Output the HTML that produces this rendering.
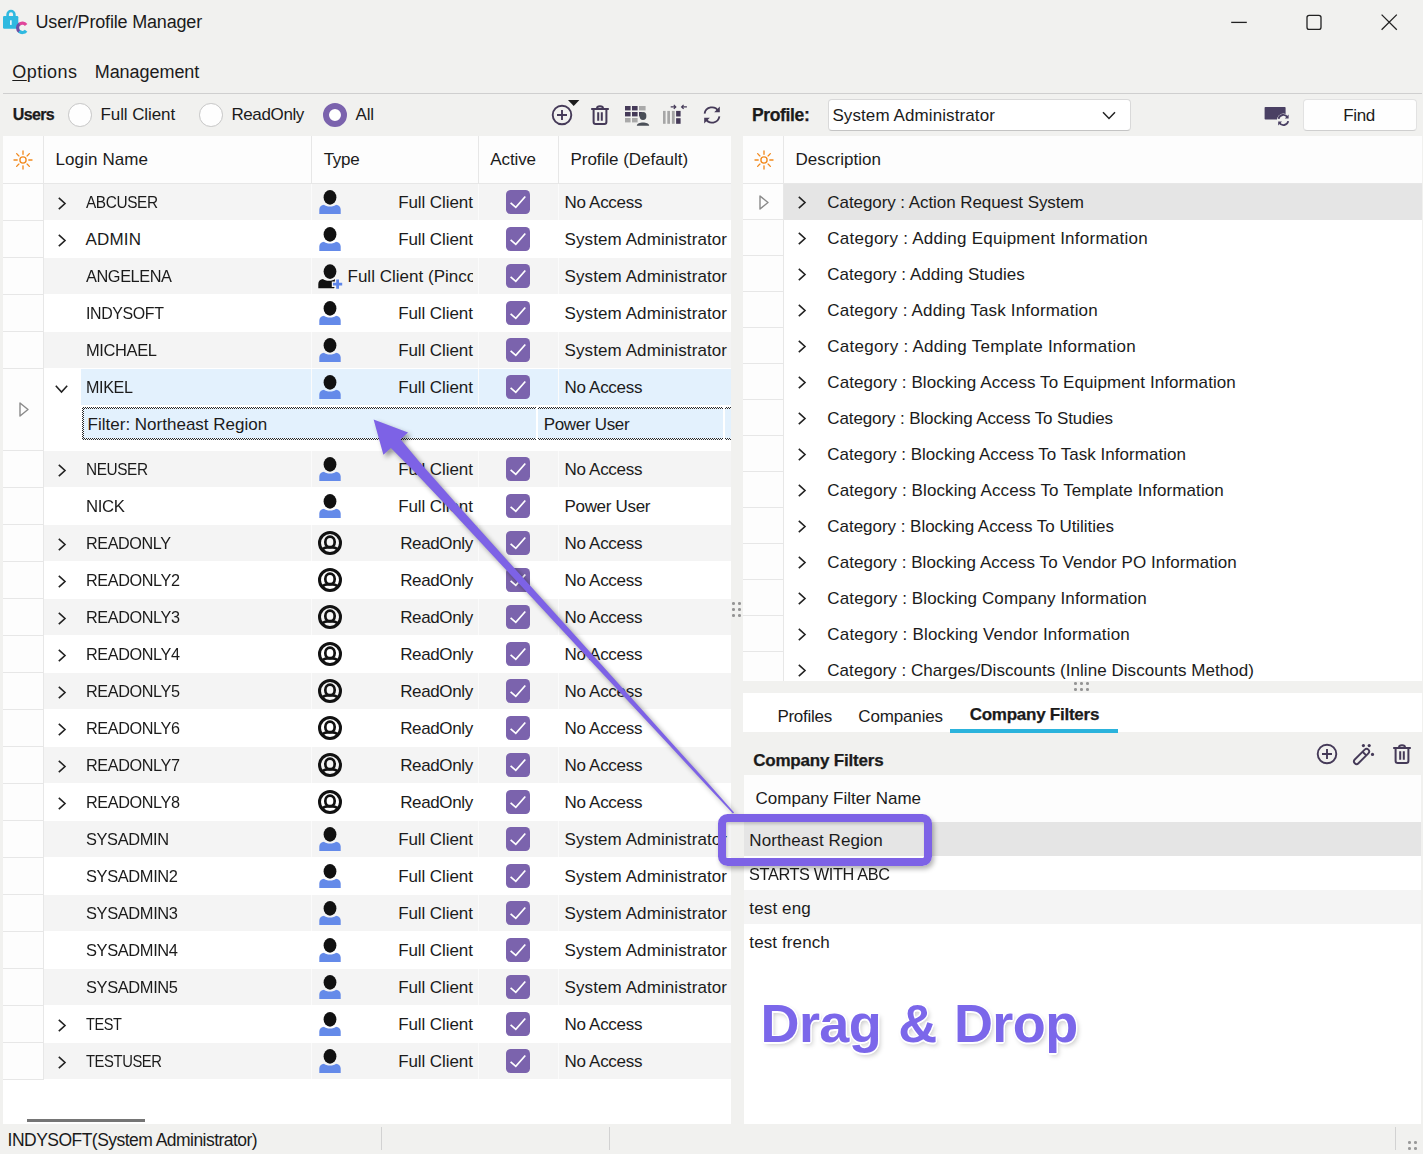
<!DOCTYPE html>
<html lang="en"><head><meta charset="utf-8"><title>User/Profile Manager</title>
<style>
*{box-sizing:border-box;margin:0;padding:0}
html,body{width:1423px;height:1154px;overflow:hidden;background:#f1f1ef}
body{position:relative;font-family:"Liberation Sans",sans-serif;font-size:17px;color:#1b1b1b;}
.a{position:absolute;white-space:nowrap}
.t{position:absolute;white-space:nowrap;line-height:36px;height:36px}
.b{font-weight:bold}
svg{position:absolute;overflow:visible}
</style></head>
<body>
<svg style="left:0;top:0" width="40" height="40" viewBox="0 0 40 40"><path d="M7.6 16.5 V14.6 a3.4 3.6 0 0 1 6.8 0 V16.5" fill="none" stroke="#2fb9e0" stroke-width="2.6"/><rect x="3" y="16" width="15.3" height="12.8" rx="1.2" fill="#2fb9e0"/><rect x="10" y="20.3" width="1.7" height="4.6" fill="#e8f7fc"/><path d="M26.1 24.9 A4.7 4.7 0 0 0 19.2 24.3" fill="none" stroke="#e0449a" stroke-width="3.2"/><path d="M19.5 24 A4.7 4.7 0 0 0 19.5 31.6" fill="none" stroke="#6e4fa5" stroke-width="3.2"/><path d="M19.2 31.3 A4.7 4.7 0 0 0 26.1 30.7" fill="none" stroke="#2fb9e0" stroke-width="3.2"/></svg>
<div class="t" style="top:4px;font-size:18px;left:35.5px;letter-spacing:-0.18px;">User/Profile Manager</div>
<svg style="left:1225px;top:8px" width="180" height="30" viewBox="0 0 180 30"><path d="M6.2 14.4 H21.8" stroke="#222" stroke-width="1.3" fill="none"/><rect x="82" y="7.4" width="14" height="14" rx="2.2" fill="none" stroke="#222" stroke-width="1.3"/><path d="M156.6 6.6 L171.8 21.8 M171.8 6.6 L156.6 21.8" stroke="#222" stroke-width="1.3" fill="none"/></svg>
<div class="t" style="top:54px;font-size:18px;left:12.3px;letter-spacing:0.45px;"><span style="text-decoration:underline;text-underline-offset:2px;text-decoration-thickness:1px">O</span>ptions</div>
<div class="t" style="top:54px;font-size:18px;left:94.7px;letter-spacing:-0.05px;">Management</div>
<div class="a" style="left:3px;top:93px;width:1419px;height:1px;background:#cfcfcf;"></div>
<div class="t" style="top:97px;font-size:16px;left:12.7px;font-weight:bold;-webkit-text-stroke:0.25px;letter-spacing:-0.6px;">Users</div>
<div class="a" style="left:68.2px;top:103.2px;width:23.6px;height:23.6px;border-radius:50%;border:1px solid #c6c6c6;background:#fefefe"></div>
<div class="t" style="top:97px;font-size:17px;left:100.5px;letter-spacing:-0.089px;">Full Client</div>
<div class="a" style="left:199.1px;top:103.2px;width:23.6px;height:23.6px;border-radius:50%;border:1px solid #c6c6c6;background:#fefefe"></div>
<div class="t" style="top:97px;font-size:17px;left:231.4px;letter-spacing:-0.374px;">ReadOnly</div>
<div class="a" style="left:323px;top:103px;width:24px;height:24px;border-radius:50%;border:6.4px solid #7b63ad;background:#fff"></div>
<div class="t" style="top:97px;font-size:17px;left:355.4px;letter-spacing:-0.098px;">All</div>
<svg style="left:551px;top:104px" width="22" height="22" viewBox="0 0 22 22"><circle cx="11" cy="11" r="9.3" fill="none" stroke="#453a58" stroke-width="1.9"/><path d="M11 6 V16 M6 11 H16" stroke="#453a58" stroke-width="1.9" fill="none"/></svg>
<svg style="left:567.5px;top:100px" width="12" height="7" viewBox="0 0 12 7"><path d="M0 0 H11.4 L5.7 6 Z" fill="#1c1c1c"/></svg>
<svg style="left:591px;top:105px" width="18" height="20" viewBox="0 0 18 20"><path d="M0.2 4 H17.8" stroke="#453a58" stroke-width="2" fill="none"/><path d="M6 3.6 C6 0.6 12 0.6 12 3.6" stroke="#453a58" stroke-width="2" fill="none"/><path d="M2.6 4 V17 a2 2 0 0 0 2 2 H13.4 a2 2 0 0 0 2 -2 V4" stroke="#453a58" stroke-width="2" fill="none"/><path d="M7.2 7.2 V15.8 M10.8 7.2 V15.8" stroke="#453a58" stroke-width="2" fill="none"/></svg>
<svg style="left:625px;top:106px" width="25" height="20" viewBox="0 0 25 20"><g fill="#453a58"><rect x="0" y="0" width="5.6" height="4.4"/><rect x="7" y="0" width="5.6" height="4.4"/><rect x="0" y="6" width="5.6" height="4.4"/><rect x="7" y="6" width="5.6" height="4.4"/><rect x="14" y="6" width="3" height="4.4"/></g><g fill="#a9a9a9"><rect x="14" y="0" width="6.6" height="4.4"/><rect x="0" y="12" width="5.6" height="4.4"/><rect x="7" y="12" width="5.6" height="4.4"/></g><ellipse cx="18" cy="10" rx="3.4" ry="4" fill="#4b5058"/><path d="M11.8 19.8 C12 15.4 24 15.4 24.2 19.8 Z" fill="#4b5058"/></svg>
<svg style="left:663px;top:103px" width="25" height="21" viewBox="0 0 25 21"><g fill="#a6a6a6"><rect x="0" y="7.9" width="2.6" height="12.9"/><rect x="4.3" y="7.9" width="2.7" height="12.9"/><rect x="8.9" y="7.9" width="2.8" height="12.9"/></g><g fill="#453a58"><rect x="13.1" y="7.9" width="4.5" height="5.6"/><rect x="13.1" y="15.2" width="4.5" height="5.6"/></g><path d="M7.7 3.9 H12.8 M10.8 1.9 L12.8 3.9 L10.8 5.9 M23.9 3.9 H18.6 M20.6 1.9 L18.6 3.9 L20.6 5.9" stroke="#453a58" stroke-width="1.2" fill="none"/></svg>
<svg style="left:702px;top:105px" width="20" height="20" viewBox="0 0 20 20"><path d="M2.6 8.6 A7.4 7.4 0 0 1 16.4 6.2" stroke="#453a58" stroke-width="1.8" fill="none"/><path d="M17.4 11.4 A7.4 7.4 0 0 1 3.6 13.8" stroke="#453a58" stroke-width="1.8" fill="none"/><path d="M17.8 1.6 V7.2 H12.2 Z" fill="#453a58"/><path d="M2.2 18.4 V12.8 H7.8 Z" fill="#453a58"/></svg>
<div class="a" style="left:3px;top:136px;width:728px;height:988px;background:#ffffff;"></div>
<div class="a" style="left:3px;top:136px;width:728px;height:47px;background:#fdfdfd;"></div>
<div class="a" style="left:3px;top:183px;width:728px;height:1px;background:#e7e7e7;"></div>
<div class="a" style="left:43px;top:136px;width:1px;height:47px;background:#e7e7e7;"></div>
<div class="a" style="left:311px;top:136px;width:1px;height:47px;background:#e7e7e7;"></div>
<div class="a" style="left:478px;top:136px;width:1px;height:47px;background:#e7e7e7;"></div>
<div class="a" style="left:558px;top:136px;width:1px;height:47px;background:#e7e7e7;"></div>
<svg style="left:13.399999999999999px;top:149.5px" width="20" height="20" viewBox="0 0 20 20"><g stroke="#f28a1e" stroke-width="1.35" fill="none" stroke-linecap="round"><circle cx="10" cy="10" r="3.1"/><line x1="15.80" y1="10.00" x2="19.00" y2="10.00"/><line x1="4.20" y1="10.00" x2="1.00" y2="10.00"/><line x1="10.00" y1="15.80" x2="10.00" y2="19.00"/><line x1="10.00" y1="4.20" x2="10.00" y2="1.00"/><line x1="14.10" y1="14.10" x2="16.36" y2="16.36"/><line x1="5.90" y1="14.10" x2="3.64" y2="16.36"/><line x1="14.10" y1="5.90" x2="16.36" y2="3.64"/><line x1="5.90" y1="5.90" x2="3.64" y2="3.64"/></g></svg>
<div class="t" style="top:142px;font-size:17px;left:55.5px;letter-spacing:0.093px;">Login Name</div>
<div class="t" style="top:142px;font-size:17px;left:323.7px;letter-spacing:-0.314px;">Type</div>
<div class="t" style="top:142px;font-size:17px;left:490.3px;letter-spacing:-0.116px;">Active</div>
<div class="t" style="top:142px;font-size:17px;left:570.5px;letter-spacing:-0.029px;">Profile (Default)</div>
<div class="a" style="left:3px;top:184px;width:40px;height:896px;background:#fdfdfd;"></div>
<div class="a" style="left:43px;top:184px;width:1px;height:896px;background:#e7e7e7;"></div>
<div class="a" style="left:44px;top:184px;width:687px;height:36px;background:#f4f4f4;"></div>
<div class="a" style="left:3px;top:220px;width:40px;height:1px;background:#e7e7e7;"></div>
<div class="a" style="left:311px;top:184px;width:1px;height:36px;background:#fbfbfb;"></div>
<div class="a" style="left:478px;top:184px;width:1px;height:36px;background:#fbfbfb;"></div>
<div class="a" style="left:558px;top:184px;width:1px;height:36px;background:#fbfbfb;"></div>
<svg style="left:58.4px;top:196.5px" width="8" height="13" viewBox="0 0 8 13"><path d="M0.8 0.8 L7 6.5 L0.8 12.2" fill="none" stroke="#222" stroke-width="1.6"/></svg>
<div class="t" style="top:185px;font-size:17px;transform:scaleX(0.9062);transform-origin:0 50%;left:85.6px;letter-spacing:-0.453px;">ABCUSER</div>
<svg style="left:319px;top:190px" width="22" height="24" viewBox="0 0 22 24"><path d="M0.3 24 V19.5 C0.3 16.8 2.2 15.2 5 14.8 C7 17.2 15 17.2 17 14.8 C19.8 15.2 21.7 16.8 21.7 19.5 V24 Z" fill="#648ae9"/><ellipse cx="11" cy="7.4" rx="6.4" ry="7.3" fill="#111"/></svg>
<div class="t" style="top:185px;font-size:17px;right:950.2px;letter-spacing:-0.089px;">Full Client</div>
<svg style="left:506px;top:190px" width="24" height="24" viewBox="0 0 24 24"><rect x="0" y="0" width="24" height="24" rx="4.5" fill="#7b63ad"/><path d="M4.6 12.8 L9.8 17.3 L19.3 6.5" fill="none" stroke="#fff" stroke-width="1.7"/></svg>
<div class="t" style="top:185px;font-size:17px;left:564.5px;width:166.5px;overflow:hidden;letter-spacing:-0.301px;">No Access</div>
<div class="a" style="left:3px;top:257px;width:40px;height:1px;background:#e7e7e7;"></div>
<svg style="left:58.4px;top:233.5px" width="8" height="13" viewBox="0 0 8 13"><path d="M0.8 0.8 L7 6.5 L0.8 12.2" fill="none" stroke="#222" stroke-width="1.6"/></svg>
<div class="t" style="top:222px;font-size:17px;left:85.6px;letter-spacing:0.165px;">ADMIN</div>
<svg style="left:319px;top:227px" width="22" height="24" viewBox="0 0 22 24"><path d="M0.3 24 V19.5 C0.3 16.8 2.2 15.2 5 14.8 C7 17.2 15 17.2 17 14.8 C19.8 15.2 21.7 16.8 21.7 19.5 V24 Z" fill="#648ae9"/><ellipse cx="11" cy="7.4" rx="6.4" ry="7.3" fill="#111"/></svg>
<div class="t" style="top:222px;font-size:17px;right:950.2px;letter-spacing:-0.089px;">Full Client</div>
<svg style="left:506px;top:227px" width="24" height="24" viewBox="0 0 24 24"><rect x="0" y="0" width="24" height="24" rx="4.5" fill="#7b63ad"/><path d="M4.6 12.8 L9.8 17.3 L19.3 6.5" fill="none" stroke="#fff" stroke-width="1.7"/></svg>
<div class="t" style="top:222px;font-size:17px;left:564.5px;width:166.5px;overflow:hidden;letter-spacing:0.1px;">System Administrator</div>
<div class="a" style="left:44px;top:258px;width:687px;height:36px;background:#f4f4f4;"></div>
<div class="a" style="left:3px;top:294px;width:40px;height:1px;background:#e7e7e7;"></div>
<div class="a" style="left:311px;top:258px;width:1px;height:36px;background:#fbfbfb;"></div>
<div class="a" style="left:478px;top:258px;width:1px;height:36px;background:#fbfbfb;"></div>
<div class="a" style="left:558px;top:258px;width:1px;height:36px;background:#fbfbfb;"></div>
<div class="t" style="top:259px;font-size:17px;transform:scaleX(0.9595);transform-origin:0 50%;left:85.6px;letter-spacing:-0.422px;">ANGELENA</div>
<svg style="left:318px;top:264px" width="26" height="25" viewBox="0 0 26 25"><path d="M0.3 24.3 V20 C0.3 17 2.2 15.4 5 15 C7 17.4 15 17.4 17 15 C18.5 15.2 19.6 15.7 20.4 16.5 L16 24.3 Z" fill="#111"/><ellipse cx="12" cy="7.6" rx="6.4" ry="7.3" fill="#111"/><path d="M19.6 14.4 V26 M13.8 20.2 H25.4" stroke="#f4f4f4" stroke-width="5.4" fill="none"/><path d="M19.6 15.6 V24.8 M15 20.2 H24.2" stroke="#5f86ea" stroke-width="2.8" fill="none"/></svg>
<div class="t" style="top:259px;font-size:17px;left:347.5px;width:125px;overflow:hidden;letter-spacing:0.015px;">Full Client (Pinco</div>
<svg style="left:506px;top:264px" width="24" height="24" viewBox="0 0 24 24"><rect x="0" y="0" width="24" height="24" rx="4.5" fill="#7b63ad"/><path d="M4.6 12.8 L9.8 17.3 L19.3 6.5" fill="none" stroke="#fff" stroke-width="1.7"/></svg>
<div class="t" style="top:259px;font-size:17px;left:564.5px;width:166.5px;overflow:hidden;letter-spacing:0.1px;">System Administrator</div>
<div class="a" style="left:3px;top:331px;width:40px;height:1px;background:#e7e7e7;"></div>
<div class="t" style="top:296px;font-size:17px;transform:scaleX(0.9379);transform-origin:0 50%;left:85.6px;letter-spacing:-0.401px;">INDYSOFT</div>
<svg style="left:319px;top:301px" width="22" height="24" viewBox="0 0 22 24"><path d="M0.3 24 V19.5 C0.3 16.8 2.2 15.2 5 14.8 C7 17.2 15 17.2 17 14.8 C19.8 15.2 21.7 16.8 21.7 19.5 V24 Z" fill="#648ae9"/><ellipse cx="11" cy="7.4" rx="6.4" ry="7.3" fill="#111"/></svg>
<div class="t" style="top:296px;font-size:17px;right:950.2px;letter-spacing:-0.089px;">Full Client</div>
<svg style="left:506px;top:301px" width="24" height="24" viewBox="0 0 24 24"><rect x="0" y="0" width="24" height="24" rx="4.5" fill="#7b63ad"/><path d="M4.6 12.8 L9.8 17.3 L19.3 6.5" fill="none" stroke="#fff" stroke-width="1.7"/></svg>
<div class="t" style="top:296px;font-size:17px;left:564.5px;width:166.5px;overflow:hidden;letter-spacing:0.1px;">System Administrator</div>
<div class="a" style="left:44px;top:332px;width:687px;height:36px;background:#f4f4f4;"></div>
<div class="a" style="left:3px;top:368px;width:40px;height:1px;background:#e7e7e7;"></div>
<div class="a" style="left:311px;top:332px;width:1px;height:36px;background:#fbfbfb;"></div>
<div class="a" style="left:478px;top:332px;width:1px;height:36px;background:#fbfbfb;"></div>
<div class="a" style="left:558px;top:332px;width:1px;height:36px;background:#fbfbfb;"></div>
<div class="t" style="top:333px;font-size:17px;transform:scaleX(0.9692);transform-origin:0 50%;left:85.6px;letter-spacing:-0.39px;">MICHAEL</div>
<svg style="left:319px;top:338px" width="22" height="24" viewBox="0 0 22 24"><path d="M0.3 24 V19.5 C0.3 16.8 2.2 15.2 5 14.8 C7 17.2 15 17.2 17 14.8 C19.8 15.2 21.7 16.8 21.7 19.5 V24 Z" fill="#648ae9"/><ellipse cx="11" cy="7.4" rx="6.4" ry="7.3" fill="#111"/></svg>
<div class="t" style="top:333px;font-size:17px;right:950.2px;letter-spacing:-0.089px;">Full Client</div>
<svg style="left:506px;top:338px" width="24" height="24" viewBox="0 0 24 24"><rect x="0" y="0" width="24" height="24" rx="4.5" fill="#7b63ad"/><path d="M4.6 12.8 L9.8 17.3 L19.3 6.5" fill="none" stroke="#fff" stroke-width="1.7"/></svg>
<div class="t" style="top:333px;font-size:17px;left:564.5px;width:166.5px;overflow:hidden;letter-spacing:0.1px;">System Administrator</div>
<div class="a" style="left:81px;top:369px;width:650px;height:36px;background:#e3f1fd;"></div>
<div class="a" style="left:3px;top:450px;width:40px;height:1px;background:#e7e7e7;"></div>
<div class="a" style="left:311px;top:369px;width:1px;height:36px;background:#fbfbfb;"></div>
<div class="a" style="left:478px;top:369px;width:1px;height:36px;background:#fbfbfb;"></div>
<div class="a" style="left:558px;top:369px;width:1px;height:36px;background:#fbfbfb;"></div>
<svg style="left:55.1px;top:384.5px" width="13" height="8" viewBox="0 0 13 8"><path d="M0.8 0.8 L6.5 7 L12.2 0.8" fill="none" stroke="#222" stroke-width="1.6"/></svg>
<div class="t" style="top:370px;font-size:17px;transform:scaleX(0.9484);transform-origin:0 50%;left:85.6px;letter-spacing:-0.377px;">MIKEL</div>
<svg style="left:319px;top:375px" width="22" height="24" viewBox="0 0 22 24"><path d="M0.3 24 V19.5 C0.3 16.8 2.2 15.2 5 14.8 C7 17.2 15 17.2 17 14.8 C19.8 15.2 21.7 16.8 21.7 19.5 V24 Z" fill="#648ae9"/><ellipse cx="11" cy="7.4" rx="6.4" ry="7.3" fill="#111"/></svg>
<div class="t" style="top:370px;font-size:17px;right:950.2px;letter-spacing:-0.089px;">Full Client</div>
<svg style="left:506px;top:375px" width="24" height="24" viewBox="0 0 24 24"><rect x="0" y="0" width="24" height="24" rx="4.5" fill="#7b63ad"/><path d="M4.6 12.8 L9.8 17.3 L19.3 6.5" fill="none" stroke="#fff" stroke-width="1.7"/></svg>
<div class="t" style="top:370px;font-size:17px;left:564.5px;width:166.5px;overflow:hidden;letter-spacing:-0.301px;">No Access</div>
<div class="a" style="left:44px;top:451px;width:687px;height:36px;background:#f4f4f4;"></div>
<div class="a" style="left:3px;top:487px;width:40px;height:1px;background:#e7e7e7;"></div>
<div class="a" style="left:311px;top:451px;width:1px;height:36px;background:#fbfbfb;"></div>
<div class="a" style="left:478px;top:451px;width:1px;height:36px;background:#fbfbfb;"></div>
<div class="a" style="left:558px;top:451px;width:1px;height:36px;background:#fbfbfb;"></div>
<svg style="left:58.4px;top:463.5px" width="8" height="13" viewBox="0 0 8 13"><path d="M0.8 0.8 L7 6.5 L0.8 12.2" fill="none" stroke="#222" stroke-width="1.6"/></svg>
<div class="t" style="top:452px;font-size:17px;transform:scaleX(0.9045);transform-origin:0 50%;left:85.6px;letter-spacing:-0.457px;">NEUSER</div>
<svg style="left:319px;top:457px" width="22" height="24" viewBox="0 0 22 24"><path d="M0.3 24 V19.5 C0.3 16.8 2.2 15.2 5 14.8 C7 17.2 15 17.2 17 14.8 C19.8 15.2 21.7 16.8 21.7 19.5 V24 Z" fill="#648ae9"/><ellipse cx="11" cy="7.4" rx="6.4" ry="7.3" fill="#111"/></svg>
<div class="t" style="top:452px;font-size:17px;right:950.2px;letter-spacing:-0.089px;">Full Client</div>
<svg style="left:506px;top:457px" width="24" height="24" viewBox="0 0 24 24"><rect x="0" y="0" width="24" height="24" rx="4.5" fill="#7b63ad"/><path d="M4.6 12.8 L9.8 17.3 L19.3 6.5" fill="none" stroke="#fff" stroke-width="1.7"/></svg>
<div class="t" style="top:452px;font-size:17px;left:564.5px;width:166.5px;overflow:hidden;letter-spacing:-0.301px;">No Access</div>
<div class="a" style="left:3px;top:524px;width:40px;height:1px;background:#e7e7e7;"></div>
<div class="t" style="top:489px;font-size:17px;transform:scaleX(0.9854);transform-origin:0 50%;left:85.6px;letter-spacing:-0.361px;">NICK</div>
<svg style="left:319px;top:494px" width="22" height="24" viewBox="0 0 22 24"><path d="M0.3 24 V19.5 C0.3 16.8 2.2 15.2 5 14.8 C7 17.2 15 17.2 17 14.8 C19.8 15.2 21.7 16.8 21.7 19.5 V24 Z" fill="#648ae9"/><ellipse cx="11" cy="7.4" rx="6.4" ry="7.3" fill="#111"/></svg>
<div class="t" style="top:489px;font-size:17px;right:950.2px;letter-spacing:-0.089px;">Full Client</div>
<svg style="left:506px;top:494px" width="24" height="24" viewBox="0 0 24 24"><rect x="0" y="0" width="24" height="24" rx="4.5" fill="#7b63ad"/><path d="M4.6 12.8 L9.8 17.3 L19.3 6.5" fill="none" stroke="#fff" stroke-width="1.7"/></svg>
<div class="t" style="top:489px;font-size:17px;left:564.5px;width:166.5px;overflow:hidden;letter-spacing:-0.32px;">Power User</div>
<div class="a" style="left:44px;top:525px;width:687px;height:36px;background:#f4f4f4;"></div>
<div class="a" style="left:3px;top:561px;width:40px;height:1px;background:#e7e7e7;"></div>
<div class="a" style="left:311px;top:525px;width:1px;height:36px;background:#fbfbfb;"></div>
<div class="a" style="left:478px;top:525px;width:1px;height:36px;background:#fbfbfb;"></div>
<div class="a" style="left:558px;top:525px;width:1px;height:36px;background:#fbfbfb;"></div>
<svg style="left:58.4px;top:537.5px" width="8" height="13" viewBox="0 0 8 13"><path d="M0.8 0.8 L7 6.5 L0.8 12.2" fill="none" stroke="#222" stroke-width="1.6"/></svg>
<div class="t" style="top:526px;font-size:17px;transform:scaleX(0.9519);transform-origin:0 50%;left:85.6px;letter-spacing:-0.424px;">READONLY</div>
<svg style="left:318px;top:531px" width="24" height="24" viewBox="0 0 24 24"><circle cx="12" cy="12" r="10.5" fill="none" stroke="#111" stroke-width="3"/><ellipse cx="12" cy="11" rx="4.7" ry="5.3" fill="none" stroke="#111" stroke-width="2.7"/><path d="M3.8 19.4 C5.2 16.8 7.8 16.2 12 16.2 C16.2 16.2 18.8 16.8 20.2 19.4" fill="none" stroke="#111" stroke-width="2.7"/></svg>
<div class="t" style="top:526px;font-size:17px;right:950.2px;letter-spacing:-0.374px;">ReadOnly</div>
<svg style="left:506px;top:531px" width="24" height="24" viewBox="0 0 24 24"><rect x="0" y="0" width="24" height="24" rx="4.5" fill="#7b63ad"/><path d="M4.6 12.8 L9.8 17.3 L19.3 6.5" fill="none" stroke="#fff" stroke-width="1.7"/></svg>
<div class="t" style="top:526px;font-size:17px;left:564.5px;width:166.5px;overflow:hidden;letter-spacing:-0.301px;">No Access</div>
<div class="a" style="left:3px;top:598px;width:40px;height:1px;background:#e7e7e7;"></div>
<svg style="left:58.4px;top:574.5px" width="8" height="13" viewBox="0 0 8 13"><path d="M0.8 0.8 L7 6.5 L0.8 12.2" fill="none" stroke="#222" stroke-width="1.6"/></svg>
<div class="t" style="top:563px;font-size:17px;transform:scaleX(0.9552);transform-origin:0 50%;left:85.6px;letter-spacing:-0.414px;">READONLY2</div>
<svg style="left:318px;top:568px" width="24" height="24" viewBox="0 0 24 24"><circle cx="12" cy="12" r="10.5" fill="none" stroke="#111" stroke-width="3"/><ellipse cx="12" cy="11" rx="4.7" ry="5.3" fill="none" stroke="#111" stroke-width="2.7"/><path d="M3.8 19.4 C5.2 16.8 7.8 16.2 12 16.2 C16.2 16.2 18.8 16.8 20.2 19.4" fill="none" stroke="#111" stroke-width="2.7"/></svg>
<div class="t" style="top:563px;font-size:17px;right:950.2px;letter-spacing:-0.374px;">ReadOnly</div>
<svg style="left:506px;top:568px" width="24" height="24" viewBox="0 0 24 24"><rect x="0" y="0" width="24" height="24" rx="4.5" fill="#7b63ad"/><path d="M4.6 12.8 L9.8 17.3 L19.3 6.5" fill="none" stroke="#fff" stroke-width="1.7"/></svg>
<div class="t" style="top:563px;font-size:17px;left:564.5px;width:166.5px;overflow:hidden;letter-spacing:-0.301px;">No Access</div>
<div class="a" style="left:44px;top:599px;width:687px;height:36px;background:#f4f4f4;"></div>
<div class="a" style="left:3px;top:635px;width:40px;height:1px;background:#e7e7e7;"></div>
<div class="a" style="left:311px;top:599px;width:1px;height:36px;background:#fbfbfb;"></div>
<div class="a" style="left:478px;top:599px;width:1px;height:36px;background:#fbfbfb;"></div>
<div class="a" style="left:558px;top:599px;width:1px;height:36px;background:#fbfbfb;"></div>
<svg style="left:58.4px;top:611.5px" width="8" height="13" viewBox="0 0 8 13"><path d="M0.8 0.8 L7 6.5 L0.8 12.2" fill="none" stroke="#222" stroke-width="1.6"/></svg>
<div class="t" style="top:600px;font-size:17px;transform:scaleX(0.9552);transform-origin:0 50%;left:85.6px;letter-spacing:-0.414px;">READONLY3</div>
<svg style="left:318px;top:605px" width="24" height="24" viewBox="0 0 24 24"><circle cx="12" cy="12" r="10.5" fill="none" stroke="#111" stroke-width="3"/><ellipse cx="12" cy="11" rx="4.7" ry="5.3" fill="none" stroke="#111" stroke-width="2.7"/><path d="M3.8 19.4 C5.2 16.8 7.8 16.2 12 16.2 C16.2 16.2 18.8 16.8 20.2 19.4" fill="none" stroke="#111" stroke-width="2.7"/></svg>
<div class="t" style="top:600px;font-size:17px;right:950.2px;letter-spacing:-0.374px;">ReadOnly</div>
<svg style="left:506px;top:605px" width="24" height="24" viewBox="0 0 24 24"><rect x="0" y="0" width="24" height="24" rx="4.5" fill="#7b63ad"/><path d="M4.6 12.8 L9.8 17.3 L19.3 6.5" fill="none" stroke="#fff" stroke-width="1.7"/></svg>
<div class="t" style="top:600px;font-size:17px;left:564.5px;width:166.5px;overflow:hidden;letter-spacing:-0.301px;">No Access</div>
<div class="a" style="left:3px;top:672px;width:40px;height:1px;background:#e7e7e7;"></div>
<svg style="left:58.4px;top:648.5px" width="8" height="13" viewBox="0 0 8 13"><path d="M0.8 0.8 L7 6.5 L0.8 12.2" fill="none" stroke="#222" stroke-width="1.6"/></svg>
<div class="t" style="top:637px;font-size:17px;transform:scaleX(0.9552);transform-origin:0 50%;left:85.6px;letter-spacing:-0.414px;">READONLY4</div>
<svg style="left:318px;top:642px" width="24" height="24" viewBox="0 0 24 24"><circle cx="12" cy="12" r="10.5" fill="none" stroke="#111" stroke-width="3"/><ellipse cx="12" cy="11" rx="4.7" ry="5.3" fill="none" stroke="#111" stroke-width="2.7"/><path d="M3.8 19.4 C5.2 16.8 7.8 16.2 12 16.2 C16.2 16.2 18.8 16.8 20.2 19.4" fill="none" stroke="#111" stroke-width="2.7"/></svg>
<div class="t" style="top:637px;font-size:17px;right:950.2px;letter-spacing:-0.374px;">ReadOnly</div>
<svg style="left:506px;top:642px" width="24" height="24" viewBox="0 0 24 24"><rect x="0" y="0" width="24" height="24" rx="4.5" fill="#7b63ad"/><path d="M4.6 12.8 L9.8 17.3 L19.3 6.5" fill="none" stroke="#fff" stroke-width="1.7"/></svg>
<div class="t" style="top:637px;font-size:17px;left:564.5px;width:166.5px;overflow:hidden;letter-spacing:-0.301px;">No Access</div>
<div class="a" style="left:44px;top:673px;width:687px;height:36px;background:#f4f4f4;"></div>
<div class="a" style="left:3px;top:709px;width:40px;height:1px;background:#e7e7e7;"></div>
<div class="a" style="left:311px;top:673px;width:1px;height:36px;background:#fbfbfb;"></div>
<div class="a" style="left:478px;top:673px;width:1px;height:36px;background:#fbfbfb;"></div>
<div class="a" style="left:558px;top:673px;width:1px;height:36px;background:#fbfbfb;"></div>
<svg style="left:58.4px;top:685.5px" width="8" height="13" viewBox="0 0 8 13"><path d="M0.8 0.8 L7 6.5 L0.8 12.2" fill="none" stroke="#222" stroke-width="1.6"/></svg>
<div class="t" style="top:674px;font-size:17px;transform:scaleX(0.9552);transform-origin:0 50%;left:85.6px;letter-spacing:-0.414px;">READONLY5</div>
<svg style="left:318px;top:679px" width="24" height="24" viewBox="0 0 24 24"><circle cx="12" cy="12" r="10.5" fill="none" stroke="#111" stroke-width="3"/><ellipse cx="12" cy="11" rx="4.7" ry="5.3" fill="none" stroke="#111" stroke-width="2.7"/><path d="M3.8 19.4 C5.2 16.8 7.8 16.2 12 16.2 C16.2 16.2 18.8 16.8 20.2 19.4" fill="none" stroke="#111" stroke-width="2.7"/></svg>
<div class="t" style="top:674px;font-size:17px;right:950.2px;letter-spacing:-0.374px;">ReadOnly</div>
<svg style="left:506px;top:679px" width="24" height="24" viewBox="0 0 24 24"><rect x="0" y="0" width="24" height="24" rx="4.5" fill="#7b63ad"/><path d="M4.6 12.8 L9.8 17.3 L19.3 6.5" fill="none" stroke="#fff" stroke-width="1.7"/></svg>
<div class="t" style="top:674px;font-size:17px;left:564.5px;width:166.5px;overflow:hidden;letter-spacing:-0.301px;">No Access</div>
<div class="a" style="left:3px;top:746px;width:40px;height:1px;background:#e7e7e7;"></div>
<svg style="left:58.4px;top:722.5px" width="8" height="13" viewBox="0 0 8 13"><path d="M0.8 0.8 L7 6.5 L0.8 12.2" fill="none" stroke="#222" stroke-width="1.6"/></svg>
<div class="t" style="top:711px;font-size:17px;transform:scaleX(0.9552);transform-origin:0 50%;left:85.6px;letter-spacing:-0.414px;">READONLY6</div>
<svg style="left:318px;top:716px" width="24" height="24" viewBox="0 0 24 24"><circle cx="12" cy="12" r="10.5" fill="none" stroke="#111" stroke-width="3"/><ellipse cx="12" cy="11" rx="4.7" ry="5.3" fill="none" stroke="#111" stroke-width="2.7"/><path d="M3.8 19.4 C5.2 16.8 7.8 16.2 12 16.2 C16.2 16.2 18.8 16.8 20.2 19.4" fill="none" stroke="#111" stroke-width="2.7"/></svg>
<div class="t" style="top:711px;font-size:17px;right:950.2px;letter-spacing:-0.374px;">ReadOnly</div>
<svg style="left:506px;top:716px" width="24" height="24" viewBox="0 0 24 24"><rect x="0" y="0" width="24" height="24" rx="4.5" fill="#7b63ad"/><path d="M4.6 12.8 L9.8 17.3 L19.3 6.5" fill="none" stroke="#fff" stroke-width="1.7"/></svg>
<div class="t" style="top:711px;font-size:17px;left:564.5px;width:166.5px;overflow:hidden;letter-spacing:-0.301px;">No Access</div>
<div class="a" style="left:44px;top:747px;width:687px;height:36px;background:#f4f4f4;"></div>
<div class="a" style="left:3px;top:783px;width:40px;height:1px;background:#e7e7e7;"></div>
<div class="a" style="left:311px;top:747px;width:1px;height:36px;background:#fbfbfb;"></div>
<div class="a" style="left:478px;top:747px;width:1px;height:36px;background:#fbfbfb;"></div>
<div class="a" style="left:558px;top:747px;width:1px;height:36px;background:#fbfbfb;"></div>
<svg style="left:58.4px;top:759.5px" width="8" height="13" viewBox="0 0 8 13"><path d="M0.8 0.8 L7 6.5 L0.8 12.2" fill="none" stroke="#222" stroke-width="1.6"/></svg>
<div class="t" style="top:748px;font-size:17px;transform:scaleX(0.9552);transform-origin:0 50%;left:85.6px;letter-spacing:-0.414px;">READONLY7</div>
<svg style="left:318px;top:753px" width="24" height="24" viewBox="0 0 24 24"><circle cx="12" cy="12" r="10.5" fill="none" stroke="#111" stroke-width="3"/><ellipse cx="12" cy="11" rx="4.7" ry="5.3" fill="none" stroke="#111" stroke-width="2.7"/><path d="M3.8 19.4 C5.2 16.8 7.8 16.2 12 16.2 C16.2 16.2 18.8 16.8 20.2 19.4" fill="none" stroke="#111" stroke-width="2.7"/></svg>
<div class="t" style="top:748px;font-size:17px;right:950.2px;letter-spacing:-0.374px;">ReadOnly</div>
<svg style="left:506px;top:753px" width="24" height="24" viewBox="0 0 24 24"><rect x="0" y="0" width="24" height="24" rx="4.5" fill="#7b63ad"/><path d="M4.6 12.8 L9.8 17.3 L19.3 6.5" fill="none" stroke="#fff" stroke-width="1.7"/></svg>
<div class="t" style="top:748px;font-size:17px;left:564.5px;width:166.5px;overflow:hidden;letter-spacing:-0.301px;">No Access</div>
<div class="a" style="left:3px;top:820px;width:40px;height:1px;background:#e7e7e7;"></div>
<svg style="left:58.4px;top:796.5px" width="8" height="13" viewBox="0 0 8 13"><path d="M0.8 0.8 L7 6.5 L0.8 12.2" fill="none" stroke="#222" stroke-width="1.6"/></svg>
<div class="t" style="top:785px;font-size:17px;transform:scaleX(0.9552);transform-origin:0 50%;left:85.6px;letter-spacing:-0.414px;">READONLY8</div>
<svg style="left:318px;top:790px" width="24" height="24" viewBox="0 0 24 24"><circle cx="12" cy="12" r="10.5" fill="none" stroke="#111" stroke-width="3"/><ellipse cx="12" cy="11" rx="4.7" ry="5.3" fill="none" stroke="#111" stroke-width="2.7"/><path d="M3.8 19.4 C5.2 16.8 7.8 16.2 12 16.2 C16.2 16.2 18.8 16.8 20.2 19.4" fill="none" stroke="#111" stroke-width="2.7"/></svg>
<div class="t" style="top:785px;font-size:17px;right:950.2px;letter-spacing:-0.374px;">ReadOnly</div>
<svg style="left:506px;top:790px" width="24" height="24" viewBox="0 0 24 24"><rect x="0" y="0" width="24" height="24" rx="4.5" fill="#7b63ad"/><path d="M4.6 12.8 L9.8 17.3 L19.3 6.5" fill="none" stroke="#fff" stroke-width="1.7"/></svg>
<div class="t" style="top:785px;font-size:17px;left:564.5px;width:166.5px;overflow:hidden;letter-spacing:-0.301px;">No Access</div>
<div class="a" style="left:44px;top:821px;width:687px;height:36px;background:#f4f4f4;"></div>
<div class="a" style="left:3px;top:857px;width:40px;height:1px;background:#e7e7e7;"></div>
<div class="a" style="left:311px;top:821px;width:1px;height:36px;background:#fbfbfb;"></div>
<div class="a" style="left:478px;top:821px;width:1px;height:36px;background:#fbfbfb;"></div>
<div class="a" style="left:558px;top:821px;width:1px;height:36px;background:#fbfbfb;"></div>
<div class="t" style="top:822px;font-size:17px;transform:scaleX(0.9652);transform-origin:0 50%;left:85.6px;letter-spacing:-0.402px;">SYSADMIN</div>
<svg style="left:319px;top:827px" width="22" height="24" viewBox="0 0 22 24"><path d="M0.3 24 V19.5 C0.3 16.8 2.2 15.2 5 14.8 C7 17.2 15 17.2 17 14.8 C19.8 15.2 21.7 16.8 21.7 19.5 V24 Z" fill="#648ae9"/><ellipse cx="11" cy="7.4" rx="6.4" ry="7.3" fill="#111"/></svg>
<div class="t" style="top:822px;font-size:17px;right:950.2px;letter-spacing:-0.089px;">Full Client</div>
<svg style="left:506px;top:827px" width="24" height="24" viewBox="0 0 24 24"><rect x="0" y="0" width="24" height="24" rx="4.5" fill="#7b63ad"/><path d="M4.6 12.8 L9.8 17.3 L19.3 6.5" fill="none" stroke="#fff" stroke-width="1.7"/></svg>
<div class="t" style="top:822px;font-size:17px;left:564.5px;width:166.5px;overflow:hidden;letter-spacing:0.1px;">System Administrator</div>
<div class="a" style="left:3px;top:894px;width:40px;height:1px;background:#e7e7e7;"></div>
<div class="t" style="top:859px;font-size:17px;transform:scaleX(0.9673);transform-origin:0 50%;left:85.6px;letter-spacing:-0.395px;">SYSADMIN2</div>
<svg style="left:319px;top:864px" width="22" height="24" viewBox="0 0 22 24"><path d="M0.3 24 V19.5 C0.3 16.8 2.2 15.2 5 14.8 C7 17.2 15 17.2 17 14.8 C19.8 15.2 21.7 16.8 21.7 19.5 V24 Z" fill="#648ae9"/><ellipse cx="11" cy="7.4" rx="6.4" ry="7.3" fill="#111"/></svg>
<div class="t" style="top:859px;font-size:17px;right:950.2px;letter-spacing:-0.089px;">Full Client</div>
<svg style="left:506px;top:864px" width="24" height="24" viewBox="0 0 24 24"><rect x="0" y="0" width="24" height="24" rx="4.5" fill="#7b63ad"/><path d="M4.6 12.8 L9.8 17.3 L19.3 6.5" fill="none" stroke="#fff" stroke-width="1.7"/></svg>
<div class="t" style="top:859px;font-size:17px;left:564.5px;width:166.5px;overflow:hidden;letter-spacing:0.1px;">System Administrator</div>
<div class="a" style="left:44px;top:895px;width:687px;height:36px;background:#f4f4f4;"></div>
<div class="a" style="left:3px;top:931px;width:40px;height:1px;background:#e7e7e7;"></div>
<div class="a" style="left:311px;top:895px;width:1px;height:36px;background:#fbfbfb;"></div>
<div class="a" style="left:478px;top:895px;width:1px;height:36px;background:#fbfbfb;"></div>
<div class="a" style="left:558px;top:895px;width:1px;height:36px;background:#fbfbfb;"></div>
<div class="t" style="top:896px;font-size:17px;transform:scaleX(0.9673);transform-origin:0 50%;left:85.6px;letter-spacing:-0.395px;">SYSADMIN3</div>
<svg style="left:319px;top:901px" width="22" height="24" viewBox="0 0 22 24"><path d="M0.3 24 V19.5 C0.3 16.8 2.2 15.2 5 14.8 C7 17.2 15 17.2 17 14.8 C19.8 15.2 21.7 16.8 21.7 19.5 V24 Z" fill="#648ae9"/><ellipse cx="11" cy="7.4" rx="6.4" ry="7.3" fill="#111"/></svg>
<div class="t" style="top:896px;font-size:17px;right:950.2px;letter-spacing:-0.089px;">Full Client</div>
<svg style="left:506px;top:901px" width="24" height="24" viewBox="0 0 24 24"><rect x="0" y="0" width="24" height="24" rx="4.5" fill="#7b63ad"/><path d="M4.6 12.8 L9.8 17.3 L19.3 6.5" fill="none" stroke="#fff" stroke-width="1.7"/></svg>
<div class="t" style="top:896px;font-size:17px;left:564.5px;width:166.5px;overflow:hidden;letter-spacing:0.1px;">System Administrator</div>
<div class="a" style="left:3px;top:968px;width:40px;height:1px;background:#e7e7e7;"></div>
<div class="t" style="top:933px;font-size:17px;transform:scaleX(0.9673);transform-origin:0 50%;left:85.6px;letter-spacing:-0.395px;">SYSADMIN4</div>
<svg style="left:319px;top:938px" width="22" height="24" viewBox="0 0 22 24"><path d="M0.3 24 V19.5 C0.3 16.8 2.2 15.2 5 14.8 C7 17.2 15 17.2 17 14.8 C19.8 15.2 21.7 16.8 21.7 19.5 V24 Z" fill="#648ae9"/><ellipse cx="11" cy="7.4" rx="6.4" ry="7.3" fill="#111"/></svg>
<div class="t" style="top:933px;font-size:17px;right:950.2px;letter-spacing:-0.089px;">Full Client</div>
<svg style="left:506px;top:938px" width="24" height="24" viewBox="0 0 24 24"><rect x="0" y="0" width="24" height="24" rx="4.5" fill="#7b63ad"/><path d="M4.6 12.8 L9.8 17.3 L19.3 6.5" fill="none" stroke="#fff" stroke-width="1.7"/></svg>
<div class="t" style="top:933px;font-size:17px;left:564.5px;width:166.5px;overflow:hidden;letter-spacing:0.1px;">System Administrator</div>
<div class="a" style="left:44px;top:969px;width:687px;height:36px;background:#f4f4f4;"></div>
<div class="a" style="left:3px;top:1005px;width:40px;height:1px;background:#e7e7e7;"></div>
<div class="a" style="left:311px;top:969px;width:1px;height:36px;background:#fbfbfb;"></div>
<div class="a" style="left:478px;top:969px;width:1px;height:36px;background:#fbfbfb;"></div>
<div class="a" style="left:558px;top:969px;width:1px;height:36px;background:#fbfbfb;"></div>
<div class="t" style="top:970px;font-size:17px;transform:scaleX(0.9673);transform-origin:0 50%;left:85.6px;letter-spacing:-0.395px;">SYSADMIN5</div>
<svg style="left:319px;top:975px" width="22" height="24" viewBox="0 0 22 24"><path d="M0.3 24 V19.5 C0.3 16.8 2.2 15.2 5 14.8 C7 17.2 15 17.2 17 14.8 C19.8 15.2 21.7 16.8 21.7 19.5 V24 Z" fill="#648ae9"/><ellipse cx="11" cy="7.4" rx="6.4" ry="7.3" fill="#111"/></svg>
<div class="t" style="top:970px;font-size:17px;right:950.2px;letter-spacing:-0.089px;">Full Client</div>
<svg style="left:506px;top:975px" width="24" height="24" viewBox="0 0 24 24"><rect x="0" y="0" width="24" height="24" rx="4.5" fill="#7b63ad"/><path d="M4.6 12.8 L9.8 17.3 L19.3 6.5" fill="none" stroke="#fff" stroke-width="1.7"/></svg>
<div class="t" style="top:970px;font-size:17px;left:564.5px;width:166.5px;overflow:hidden;letter-spacing:0.1px;">System Administrator</div>
<div class="a" style="left:3px;top:1042px;width:40px;height:1px;background:#e7e7e7;"></div>
<svg style="left:58.4px;top:1018.5px" width="8" height="13" viewBox="0 0 8 13"><path d="M0.8 0.8 L7 6.5 L0.8 12.2" fill="none" stroke="#222" stroke-width="1.6"/></svg>
<div class="t" style="top:1007px;font-size:17px;transform:scaleX(0.8544);transform-origin:0 50%;left:85.6px;letter-spacing:-0.445px;">TEST</div>
<svg style="left:319px;top:1012px" width="22" height="24" viewBox="0 0 22 24"><path d="M0.3 24 V19.5 C0.3 16.8 2.2 15.2 5 14.8 C7 17.2 15 17.2 17 14.8 C19.8 15.2 21.7 16.8 21.7 19.5 V24 Z" fill="#648ae9"/><ellipse cx="11" cy="7.4" rx="6.4" ry="7.3" fill="#111"/></svg>
<div class="t" style="top:1007px;font-size:17px;right:950.2px;letter-spacing:-0.089px;">Full Client</div>
<svg style="left:506px;top:1012px" width="24" height="24" viewBox="0 0 24 24"><rect x="0" y="0" width="24" height="24" rx="4.5" fill="#7b63ad"/><path d="M4.6 12.8 L9.8 17.3 L19.3 6.5" fill="none" stroke="#fff" stroke-width="1.7"/></svg>
<div class="t" style="top:1007px;font-size:17px;left:564.5px;width:166.5px;overflow:hidden;letter-spacing:-0.301px;">No Access</div>
<div class="a" style="left:44px;top:1043px;width:687px;height:36px;background:#f4f4f4;"></div>
<div class="a" style="left:3px;top:1079px;width:40px;height:1px;background:#e7e7e7;"></div>
<div class="a" style="left:311px;top:1043px;width:1px;height:36px;background:#fbfbfb;"></div>
<div class="a" style="left:478px;top:1043px;width:1px;height:36px;background:#fbfbfb;"></div>
<div class="a" style="left:558px;top:1043px;width:1px;height:36px;background:#fbfbfb;"></div>
<svg style="left:58.4px;top:1055.5px" width="8" height="13" viewBox="0 0 8 13"><path d="M0.8 0.8 L7 6.5 L0.8 12.2" fill="none" stroke="#222" stroke-width="1.6"/></svg>
<div class="t" style="top:1044px;font-size:17px;transform:scaleX(0.8687);transform-origin:0 50%;left:85.6px;letter-spacing:-0.457px;">TESTUSER</div>
<svg style="left:319px;top:1049px" width="22" height="24" viewBox="0 0 22 24"><path d="M0.3 24 V19.5 C0.3 16.8 2.2 15.2 5 14.8 C7 17.2 15 17.2 17 14.8 C19.8 15.2 21.7 16.8 21.7 19.5 V24 Z" fill="#648ae9"/><ellipse cx="11" cy="7.4" rx="6.4" ry="7.3" fill="#111"/></svg>
<div class="t" style="top:1044px;font-size:17px;right:950.2px;letter-spacing:-0.089px;">Full Client</div>
<svg style="left:506px;top:1049px" width="24" height="24" viewBox="0 0 24 24"><rect x="0" y="0" width="24" height="24" rx="4.5" fill="#7b63ad"/><path d="M4.6 12.8 L9.8 17.3 L19.3 6.5" fill="none" stroke="#fff" stroke-width="1.7"/></svg>
<div class="t" style="top:1044px;font-size:17px;left:564.5px;width:166.5px;overflow:hidden;letter-spacing:-0.301px;">No Access</div>
<svg style="left:19.3px;top:402.2px" width="10" height="15" viewBox="0 0 10 15"><path d="M1 1 L9 7.5 L1 14 Z" fill="none" stroke="#8a8a8a" stroke-width="1.4" stroke-linejoin="round"/></svg>
<div class="a" style="left:82px;top:407px;width:454px;height:33px;background:repeating-conic-gradient(#2a2a2a 0% 25%, #f4f8fc 0% 50%) 0 0/2px 2px"><div class="a" style="left:2px;top:2px;right:0;bottom:2px;background:#e3f1fd"></div></div>
<div class="a" style="left:538px;top:407px;width:185px;height:33px;background:repeating-conic-gradient(#2a2a2a 0% 25%, #f4f8fc 0% 50%) 0 0/2px 2px"><div class="a" style="left:0px;top:2px;right:0;bottom:2px;background:#e3f1fd"></div></div>
<div class="a" style="left:725px;top:407px;width:6px;height:33px;background:repeating-conic-gradient(#2a2a2a 0% 25%, #f4f8fc 0% 50%) 0 0/2px 2px"><div class="a" style="left:0px;top:2px;right:0;bottom:2px;background:#e3f1fd"></div></div>
<div class="t" style="top:407px;font-size:17px;left:87.6px;letter-spacing:0.003px;">Filter: Northeast Region</div>
<div class="t" style="top:407px;font-size:17px;left:543.7px;letter-spacing:-0.32px;">Power User</div>
<div class="a" style="left:27px;top:1119px;width:118px;height:3px;background:#757575;"></div>
<div class="t" style="top:97px;font-size:17.5px;left:752.0px;font-weight:bold;-webkit-text-stroke:0.25px;letter-spacing:-0.35px;">Profile:</div>
<div class="a" style="left:828px;top:99px;width:303px;height:32px;background:#fff;border:1px solid #d9d9d9;border-bottom-color:#c4c4c4;border-radius:4px"></div>
<div class="t" style="top:98px;font-size:17px;left:832.4px;letter-spacing:0.1px;">System Administrator</div>
<svg style="left:1102px;top:110.8px" width="14" height="9" viewBox="0 0 14 9"><path d="M1 1.2 L7 7.4 L13 1.2" fill="none" stroke="#222" stroke-width="1.5"/></svg>
<svg style="left:1264px;top:106px" width="27" height="21" viewBox="0 0 27 21"><rect x="0.6" y="1" width="21" height="12.6" rx="0.8" fill="#4a4063"/><circle cx="19.4" cy="14" r="6.4" fill="#f1f1ef"/><path d="M14.6 12.8 A4.8 4.8 0 0 1 23.4 11.2" stroke="#4a4063" stroke-width="1.8" fill="none"/><path d="M24.2 15.2 A4.8 4.8 0 0 1 15.4 16.8" stroke="#4a4063" stroke-width="1.8" fill="none"/><path d="M24.6 8.6 V12.4 H20.8 Z" fill="#4a4063"/><path d="M14.2 19.4 V15.6 H18 Z" fill="#4a4063"/></svg>
<div class="a" style="left:1303px;top:99px;width:114px;height:32px;background:#fefefe;border:1px solid #e2e2e2;border-bottom-color:#cfcfcf;border-radius:4px"></div>
<div class="t" style="top:98px;font-size:17px;left:1343.3px;letter-spacing:-0.368px;">Find</div>
<div class="a" style="left:743px;top:136px;width:679px;height:545px;background:#ffffff;"></div>
<div class="a" style="left:743px;top:136px;width:679px;height:47px;background:#fdfdfd;"></div>
<div class="a" style="left:743px;top:183px;width:679px;height:1px;background:#e7e7e7;"></div>
<div class="a" style="left:783px;top:136px;width:1px;height:545px;background:#e7e7e7;"></div>
<div class="a" style="left:743px;top:184px;width:40px;height:497px;background:#fdfdfd;"></div>
<svg style="left:753.6px;top:149.5px" width="20" height="20" viewBox="0 0 20 20"><g stroke="#f28a1e" stroke-width="1.35" fill="none" stroke-linecap="round"><circle cx="10" cy="10" r="3.1"/><line x1="15.80" y1="10.00" x2="19.00" y2="10.00"/><line x1="4.20" y1="10.00" x2="1.00" y2="10.00"/><line x1="10.00" y1="15.80" x2="10.00" y2="19.00"/><line x1="10.00" y1="4.20" x2="10.00" y2="1.00"/><line x1="14.10" y1="14.10" x2="16.36" y2="16.36"/><line x1="5.90" y1="14.10" x2="3.64" y2="16.36"/><line x1="14.10" y1="5.90" x2="16.36" y2="3.64"/><line x1="5.90" y1="5.90" x2="3.64" y2="3.64"/></g></svg>
<div class="t" style="top:142px;font-size:17px;left:795.5px;letter-spacing:0.051px;">Description</div>
<div class="a" style="left:743px;top:184px;width:679px;height:497px;overflow:hidden">
<div class="a" style="left:41px;top:0;width:638px;height:35.5px;background:#e5e5e5"></div>
<div class="a" style="left:0;top:35px;width:40px;height:1px;background:#e7e7e7"></div>
<svg style="left:55.39999999999998px;top:11.5px" width="8" height="13" viewBox="0 0 8 13"><path d="M0.8 0.8 L7 6.5 L0.8 12.2" fill="none" stroke="#222" stroke-width="1.6"/></svg>
<div class="t" style="left:84.29999999999995px;top:1px;letter-spacing:-0.072px">Category : Action Request System</div>
<div class="a" style="left:0;top:71px;width:40px;height:1px;background:#e7e7e7"></div>
<svg style="left:55.39999999999998px;top:47.5px" width="8" height="13" viewBox="0 0 8 13"><path d="M0.8 0.8 L7 6.5 L0.8 12.2" fill="none" stroke="#222" stroke-width="1.6"/></svg>
<div class="t" style="left:84.29999999999995px;top:37px;letter-spacing:0.249px">Category : Adding Equipment Information</div>
<div class="a" style="left:0;top:107px;width:40px;height:1px;background:#e7e7e7"></div>
<svg style="left:55.39999999999998px;top:83.5px" width="8" height="13" viewBox="0 0 8 13"><path d="M0.8 0.8 L7 6.5 L0.8 12.2" fill="none" stroke="#222" stroke-width="1.6"/></svg>
<div class="t" style="left:84.29999999999995px;top:73px;letter-spacing:0.041px">Category : Adding Studies</div>
<div class="a" style="left:0;top:143px;width:40px;height:1px;background:#e7e7e7"></div>
<svg style="left:55.39999999999998px;top:119.5px" width="8" height="13" viewBox="0 0 8 13"><path d="M0.8 0.8 L7 6.5 L0.8 12.2" fill="none" stroke="#222" stroke-width="1.6"/></svg>
<div class="t" style="left:84.29999999999995px;top:109px;letter-spacing:0.186px">Category : Adding Task Information</div>
<div class="a" style="left:0;top:179px;width:40px;height:1px;background:#e7e7e7"></div>
<svg style="left:55.39999999999998px;top:155.5px" width="8" height="13" viewBox="0 0 8 13"><path d="M0.8 0.8 L7 6.5 L0.8 12.2" fill="none" stroke="#222" stroke-width="1.6"/></svg>
<div class="t" style="left:84.29999999999995px;top:145px;letter-spacing:0.271px">Category : Adding Template Information</div>
<div class="a" style="left:0;top:215px;width:40px;height:1px;background:#e7e7e7"></div>
<svg style="left:55.39999999999998px;top:191.5px" width="8" height="13" viewBox="0 0 8 13"><path d="M0.8 0.8 L7 6.5 L0.8 12.2" fill="none" stroke="#222" stroke-width="1.6"/></svg>
<div class="t" style="left:84.29999999999995px;top:181px;letter-spacing:0.088px">Category : Blocking Access To Equipment Information</div>
<div class="a" style="left:0;top:251px;width:40px;height:1px;background:#e7e7e7"></div>
<svg style="left:55.39999999999998px;top:227.5px" width="8" height="13" viewBox="0 0 8 13"><path d="M0.8 0.8 L7 6.5 L0.8 12.2" fill="none" stroke="#222" stroke-width="1.6"/></svg>
<div class="t" style="left:84.29999999999995px;top:217px;letter-spacing:-0.113px">Category : Blocking Access To Studies</div>
<div class="a" style="left:0;top:287px;width:40px;height:1px;background:#e7e7e7"></div>
<svg style="left:55.39999999999998px;top:263.5px" width="8" height="13" viewBox="0 0 8 13"><path d="M0.8 0.8 L7 6.5 L0.8 12.2" fill="none" stroke="#222" stroke-width="1.6"/></svg>
<div class="t" style="left:84.29999999999995px;top:253px;letter-spacing:0.024px">Category : Blocking Access To Task Information</div>
<div class="a" style="left:0;top:323px;width:40px;height:1px;background:#e7e7e7"></div>
<svg style="left:55.39999999999998px;top:299.5px" width="8" height="13" viewBox="0 0 8 13"><path d="M0.8 0.8 L7 6.5 L0.8 12.2" fill="none" stroke="#222" stroke-width="1.6"/></svg>
<div class="t" style="left:84.29999999999995px;top:289px;letter-spacing:0.102px">Category : Blocking Access To Template Information</div>
<div class="a" style="left:0;top:359px;width:40px;height:1px;background:#e7e7e7"></div>
<svg style="left:55.39999999999998px;top:335.5px" width="8" height="13" viewBox="0 0 8 13"><path d="M0.8 0.8 L7 6.5 L0.8 12.2" fill="none" stroke="#222" stroke-width="1.6"/></svg>
<div class="t" style="left:84.29999999999995px;top:325px;letter-spacing:-0.032px">Category : Blocking Access To Utilities</div>
<div class="a" style="left:0;top:395px;width:40px;height:1px;background:#e7e7e7"></div>
<svg style="left:55.39999999999998px;top:371.5px" width="8" height="13" viewBox="0 0 8 13"><path d="M0.8 0.8 L7 6.5 L0.8 12.2" fill="none" stroke="#222" stroke-width="1.6"/></svg>
<div class="t" style="left:84.29999999999995px;top:361px;letter-spacing:0.07px">Category : Blocking Access To Vendor PO Information</div>
<div class="a" style="left:0;top:431px;width:40px;height:1px;background:#e7e7e7"></div>
<svg style="left:55.39999999999998px;top:407.5px" width="8" height="13" viewBox="0 0 8 13"><path d="M0.8 0.8 L7 6.5 L0.8 12.2" fill="none" stroke="#222" stroke-width="1.6"/></svg>
<div class="t" style="left:84.29999999999995px;top:397px;letter-spacing:0.127px">Category : Blocking Company Information</div>
<div class="a" style="left:0;top:467px;width:40px;height:1px;background:#e7e7e7"></div>
<svg style="left:55.39999999999998px;top:443.5px" width="8" height="13" viewBox="0 0 8 13"><path d="M0.8 0.8 L7 6.5 L0.8 12.2" fill="none" stroke="#222" stroke-width="1.6"/></svg>
<div class="t" style="left:84.29999999999995px;top:433px;letter-spacing:0.18px">Category : Blocking Vendor Information</div>
<div class="a" style="left:0;top:503px;width:40px;height:1px;background:#e7e7e7"></div>
<svg style="left:55.39999999999998px;top:479.5px" width="8" height="13" viewBox="0 0 8 13"><path d="M0.8 0.8 L7 6.5 L0.8 12.2" fill="none" stroke="#222" stroke-width="1.6"/></svg>
<div class="t" style="left:84.29999999999995px;top:469px;letter-spacing:0.044px">Category : Charges/Discounts (Inline Discounts Method)</div>
</div>
<svg style="left:759.3px;top:194.7px" width="10" height="15" viewBox="0 0 10 15"><path d="M1 1 L9 7.5 L1 14 Z" fill="none" stroke="#8a8a8a" stroke-width="1.4" stroke-linejoin="round"/></svg>
<svg style="left:1074.4px;top:682.4px" width="20" height="14"><rect x="0.0" y="0.0" width="3" height="3" rx="1.36" fill="#959595"/><rect x="0.0" y="6.0" width="3" height="3" rx="1.36" fill="#959595"/><rect x="6.0" y="0.0" width="3" height="3" rx="1.36" fill="#959595"/><rect x="6.0" y="6.0" width="3" height="3" rx="1.36" fill="#959595"/><rect x="12.0" y="0.0" width="3" height="3" rx="1.36" fill="#959595"/><rect x="12.0" y="6.0" width="3" height="3" rx="1.36" fill="#959595"/></svg>
<svg style="left:732.4px;top:601.5px" width="14" height="20"><rect x="0.0" y="0.0" width="3" height="3" rx="1.36" fill="#959595"/><rect x="0.0" y="6.0" width="3" height="3" rx="1.36" fill="#959595"/><rect x="0.0" y="12.0" width="3" height="3" rx="1.36" fill="#959595"/><rect x="6.0" y="0.0" width="3" height="3" rx="1.36" fill="#959595"/><rect x="6.0" y="6.0" width="3" height="3" rx="1.36" fill="#959595"/><rect x="6.0" y="12.0" width="3" height="3" rx="1.36" fill="#959595"/></svg>
<div class="a" style="left:743px;top:693px;width:679px;height:39px;background:#ffffff;"></div>
<div class="t" style="top:699px;font-size:17px;left:777.4px;letter-spacing:-0.261px;">Profiles</div>
<div class="t" style="top:699px;font-size:17px;left:858.3px;letter-spacing:-0.154px;">Companies</div>
<div class="t" style="top:697px;font-size:17px;left:969.7px;font-weight:bold;-webkit-text-stroke:0.25px;letter-spacing:-0.25px;">Company Filters</div>
<div class="a" style="left:950px;top:728.5px;width:168px;height:4px;background:#2bb3dc;"></div>
<div class="t" style="top:743px;font-size:17px;left:753.2px;font-weight:bold;-webkit-text-stroke:0.25px;letter-spacing:-0.2px;">Company Filters</div>
<svg style="left:1316px;top:743px" width="22" height="22" viewBox="0 0 22 22"><circle cx="11" cy="11" r="9.3" fill="none" stroke="#453a58" stroke-width="1.9"/><path d="M11 6 V16 M6 11 H16" stroke="#453a58" stroke-width="1.9" fill="none"/></svg>
<svg style="left:1353px;top:743px" width="22" height="22" viewBox="0 0 22 22"><g transform="rotate(45 8.5 13.5)"><rect x="5.9" y="3.8" width="5.2" height="19.2" rx="2.6" fill="none" stroke="#453a58" stroke-width="1.9"/><path d="M5.9 9.4 H11.1" stroke="#453a58" stroke-width="1.9"/></g><circle cx="10.4" cy="2.6" r="1.6" fill="#453a58"/><circle cx="16.2" cy="2.6" r="1.6" fill="#453a58"/><circle cx="19.5" cy="11.4" r="1.6" fill="#453a58"/></svg>
<svg style="left:1393px;top:744px" width="18" height="20" viewBox="0 0 18 20"><path d="M0.2 4 H17.8" stroke="#453a58" stroke-width="2" fill="none"/><path d="M6 3.6 C6 0.6 12 0.6 12 3.6" stroke="#453a58" stroke-width="2" fill="none"/><path d="M2.6 4 V17 a2 2 0 0 0 2 2 H13.4 a2 2 0 0 0 2 -2 V4" stroke="#453a58" stroke-width="2" fill="none"/><path d="M7.2 7.2 V15.8 M10.8 7.2 V15.8" stroke="#453a58" stroke-width="2" fill="none"/></svg>
<div class="a" style="left:744px;top:775px;width:1677px;height:349px;background:#ffffff;width:677px;"></div>
<div class="a" style="left:744px;top:775px;width:677px;height:47px;background:#fdfdfd;"></div>
<div class="t" style="top:781px;font-size:17px;left:755.5px;letter-spacing:0.014px;">Company Filter Name</div>
<div class="a" style="left:744px;top:822px;width:677px;height:34px;background:#e5e5e5;"></div>
<div class="a" style="left:744px;top:890px;width:677px;height:34px;background:#f4f4f4;"></div>
<div class="t" style="top:823px;font-size:17px;left:749.3px;letter-spacing:0.081px;">Northeast Region</div>
<div class="t" style="top:857px;font-size:17px;transform:scaleX(0.9577);transform-origin:0 50%;left:749.3px;letter-spacing:-0.371px;">STARTS WITH ABC</div>
<div class="t" style="top:891px;font-size:17px;left:749.3px;letter-spacing:0.139px;">test eng</div>
<div class="t" style="top:925px;font-size:17px;left:749.3px;letter-spacing:0.112px;">test french</div>
<div class="t" style="top:1122px;font-size:17.5px;left:7.6px;letter-spacing:-0.53px;">INDYSOFT(System Administrator)</div>
<div class="a" style="left:381px;top:1127px;width:1px;height:23px;background:#d2d2d2;"></div>
<div class="a" style="left:609px;top:1127px;width:1px;height:23px;background:#d2d2d2;"></div>
<div class="a" style="left:1395px;top:1127px;width:1px;height:23px;background:#d2d2d2;"></div>
<svg style="left:1408px;top:1141px" width="14" height="14"><rect x="0.0" y="0.0" width="3" height="3" rx="1.36" fill="#9a9a9a"/><rect x="0.0" y="6.0" width="3" height="3" rx="1.36" fill="#9a9a9a"/><rect x="6.0" y="0.0" width="3" height="3" rx="1.36" fill="#9a9a9a"/><rect x="6.0" y="6.0" width="3" height="3" rx="1.36" fill="#9a9a9a"/></svg>
<svg style="left:0;top:0;filter:drop-shadow(3px 3px 2.5px rgba(0,0,0,.4))" width="1423" height="1154" viewBox="0 0 1423 1154"><path d="M373.6 419.5 L408.0 432.4 L400.5 439.2 L420.6 463.2 L456.0 503.2 L523.7 578.5 L591.6 653.7 L634.4 701.3 L670.0 741.0 L709.3 784.6 L734.1 812.5 L732.9 813.5 L707.3 786.3 L667.5 743.3 L631.1 704.3 L587.5 657.5 L518.6 583.2 L449.6 509.0 L413.0 470.2 L390.9 448.0 L383.4 454.8 Z" fill="#7d62e6"/></svg>
<div class="a" style="left:718px;top:814px;width:214px;height:52px;border:8px solid #7d62e6;border-radius:9.5px;box-shadow:2px 3px 5px rgba(0,0,0,.3), inset 1px 2px 3px rgba(0,0,0,.18)"></div>
<div class="a" style="left:760.5px;top:987px;font-size:54px;font-weight:bold;line-height:72px;color:#7b67ea;letter-spacing:-0.6px;word-spacing:2.8px;text-shadow:-1.5px 0 #fff,1.5px 0 #fff,0 -1.5px #fff,0 1.5px #fff,-1px -1px #fff,1px 1px #fff,-1px 1px #fff,1px -1px #fff,2px 3px 5px rgba(0,0,0,.22)">Drag &amp; Drop</div>
</body></html>
